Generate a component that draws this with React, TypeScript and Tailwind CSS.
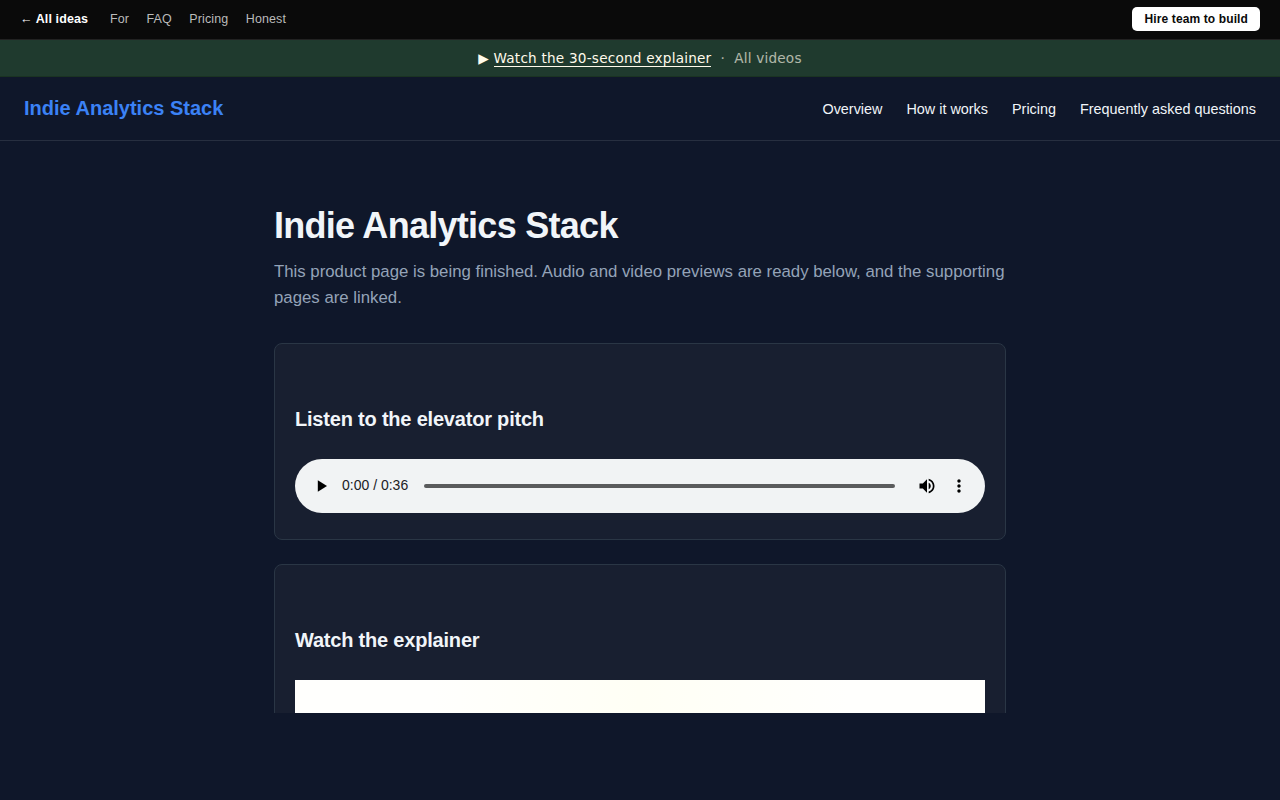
import type { ReactNode } from 'react';

const topLinks = ['For', 'FAQ', 'Pricing', 'Honest'];
const navLinks = ['Overview', 'How it works', 'Pricing', 'Frequently asked questions'];

function TopBar() {
  return (
    <div className="flex h-10 items-center justify-between border-b border-[#222222] bg-[#0a0a0a] px-5 pb-px text-[12.48px] tracking-[0.12px]">
      <div className="flex items-center gap-[17.5px]">
        <a href="#" className="mr-[4.4px] font-bold text-white">← All ideas</a>
        {topLinks.map((link) => (
          <a key={link} href="#" className="text-[#bbbbbb]">{link}</a>
        ))}
      </div>
      <a href="#" className="rounded-[5px] bg-white px-3 py-1 text-xs leading-4 font-bold text-[#0a0a0a]">
        Hire team to build
      </a>
    </div>
  );
}

function VideoBanner() {
  return (
    <div className="h-[37px] border-b border-[#1a3322] bg-[#1f3a2e] text-center font-['DejaVu_Sans',sans-serif] text-[13.6px] leading-9 tracking-[0.22px] text-[#fffbeb]">
      ▶ <a href="#" className="border-b border-[#fffbeb]">Watch the 30-second explainer</a>
      <span className="opacity-65">&nbsp; · &nbsp;</span>
      <a href="#" className="opacity-65">All videos</a>
    </div>
  );
}

function SiteHeader() {
  return (
    <header className="flex h-16 items-center justify-between border-b border-[#272f40] px-6">
      <a href="#" className="pb-0.5 text-xl font-bold text-[#3b82f6]">Indie Analytics Stack</a>
      <nav className="flex gap-6 pt-0.5 text-[14.4px] text-slate-100">
        {navLinks.map((link) => (
          <a key={link} href="#">{link}</a>
        ))}
      </nav>
    </header>
  );
}

function Card({ title, children }: { title: string; children: ReactNode }) {
  return (
    <section className="mb-6 rounded-lg border border-[#2a3645] bg-[#181f30] px-5 pt-[59px] pb-[26px]">
      <h2 className="mb-6 text-xl leading-8 font-bold tracking-[-0.2px]">{title}</h2>
      {children}
    </section>
  );
}

function AudioPlayer() {
  return (
    <div className="flex h-[54px] items-center rounded-full bg-[#f1f3f4] pr-4 pl-[17px] text-black">
      <svg className="size-5" viewBox="0 0 24 24" fill="currentColor">
        <path d="M7 5v14l11-7z" />
      </svg>
      <span className="ml-[10px] pb-0.5 text-sm text-[#202124]">0:00 / 0:36</span>
      <div className="mr-[22.5px] ml-4 h-1 flex-1 rounded-full bg-[#5a5b5c]" />
      <svg className="size-5" viewBox="0 0 24 24" fill="currentColor">
        <path d="M3 9v6h4l5 5V4L7 9H3zm13.5 3c0-1.77-1.02-3.29-2.5-4.03v8.05c1.48-.73 2.5-2.25 2.5-4.02zM14 3.23v2.06c2.89.86 5 3.54 5 6.71s-2.11 5.85-5 6.71v2.06c4.01-.91 7-4.49 7-8.77s-2.99-7.86-7-8.77z" />
      </svg>
      <svg className="ml-3 size-5" viewBox="0 0 24 24" fill="currentColor">
        <path d="M12 8c1.1 0 2-.9 2-2s-.9-2-2-2-2 .9-2 2 .9 2 2 2zm0 2c-1.1 0-2 .9-2 2s.9 2 2 2 2-.9 2-2-.9-2-2-2zm0 6c-1.1 0-2 .9-2 2s.9 2 2 2 2-.9 2-2-.9-2-2-2z" />
      </svg>
    </div>
  );
}

export default function App() {
  return (
    <div className="min-h-screen bg-[#0f172a] font-['Liberation_Sans',sans-serif] text-slate-100">
      {/* Everything past the fold of the frame is cut off */}
      <div className="h-[713px] overflow-hidden">
        <TopBar />
        <VideoBanner />
        <SiteHeader />

        <main className="mx-auto w-[732px] pt-16">
          <h1 className="text-4xl leading-[42px] font-bold tracking-[-0.72px]">Indie Analytics Stack</h1>
          <p className="mt-3 mb-8 text-[16.8px] leading-[26px] text-[#94a3b8]">
            This product page is being finished. Audio and video previews are ready below, and the supporting pages are linked.
          </p>

          <Card title="Listen to the elevator pitch">
            <AudioPlayer />
          </Card>

          <Card title="Watch the explainer">
            <div className="h-[388px] bg-linear-to-r from-[#fffffd] from-20% via-[#fffff5] to-[#fffffd] to-80%" />
          </Card>
        </main>
      </div>
    </div>
  );
}
